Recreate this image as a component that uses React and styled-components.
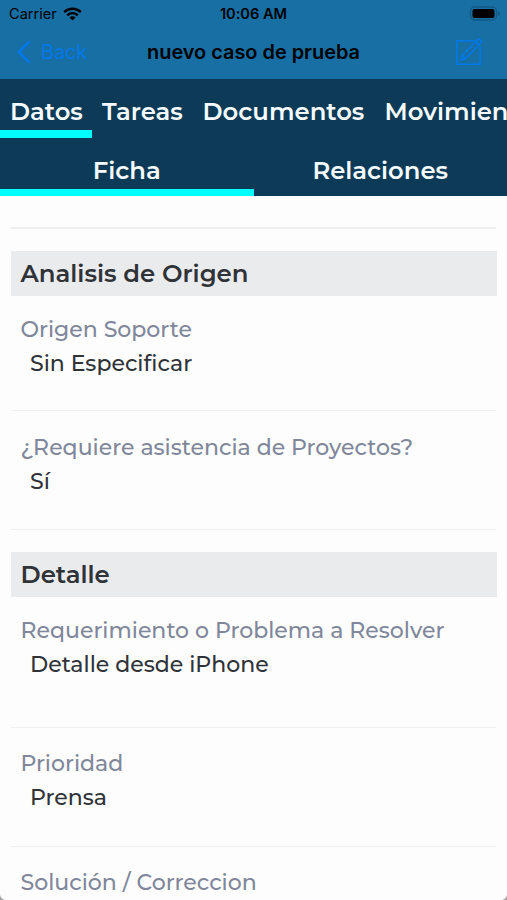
import styled, { createGlobalStyle } from 'styled-components'

const colors = {
  header: '#186fa3',
  tabs: '#0d3b57',
  accent: '#00ffff',
  blue: '#0478e8',
  white: '#f4fafd',
  page: '#fdfdfe',
  section: '#eaebed',
  divider: '#eeeff0',
  label: '#80879a',
  text: '#2f3338',
}

const tabs = [
  { name: 'Datos', width: 92, active: true },
  { name: 'Tareas', width: 100.5 },
  { name: 'Documentos', width: 182 },
  { name: 'Movimientos', width: 190 },
]

const subTabs = [{ name: 'Ficha', active: true }, { name: 'Relaciones' }]

const sections = [
  {
    title: 'Analisis de Origen',
    fields: [
      { label: 'Origen Soporte', value: 'Sin Especificar', height: 115, top: 21 },
      { label: '¿Requiere asistencia de Proyectos?', value: 'Sí', height: 119, top: 24 },
    ],
  },
  {
    title: 'Detalle',
    fields: [
      {
        label: 'Requerimiento o Problema a Resolver',
        value: 'Detalle desde iPhone',
        height: 131,
        top: 21,
      },
      { label: 'Prioridad', value: 'Prensa', height: 119, top: 23 },
      { label: 'Solución / Correccion', value: '', height: 119, top: 23 },
    ],
  },
]

const App = () => {
  return (
    <Screen>
      <GlobalStyle />
      <StatusBar>
        <Carrier>
          Carrier
          <svg width='19' height='14' viewBox='0 0 19 14'>
            <g fill='none' stroke='#000' strokeWidth='2.4'>
              <path d='M1.2 5.1a11.8 11.8 0 0 1 16.6 0' />
              <path d='M4.2 8.3a7.6 7.6 0 0 1 10.6 0' />
            </g>
            <path d='M9.5 13.6L6.4 10.5a4.4 4.4 0 0 1 6.2 0z' />
          </svg>
        </Carrier>
        <Clock>10:06 AM</Clock>
        <Battery>
          <svg width='31' height='15' viewBox='0 0 31 15'>
            <rect x='1.5' y='1' width='26' height='13' rx='4' fill='none' stroke='#125a85' strokeWidth='1.3' />
            <rect x='3.5' y='3' width='22' height='9' rx='2' />
            <path d='M29 5v5q2-1 2-2.500t-2-2.500z' fill='#125a85' />
          </svg>
        </Battery>
      </StatusBar>
      <NavBar>
        <Back>
          <svg width='14' height='24' viewBox='0 0 14 24'>
            <path d='M12.500 1.500L2 12l10.500 10.500' fill='none' stroke='currentColor' strokeWidth='2.600' />
          </svg>
          <span>Back</span>
        </Back>
        <Title>nuevo caso de prueba</Title>
        <Edit>
          <svg width='28' height='28' viewBox='0 0 28 28' fill='none' stroke='currentColor' strokeWidth='1.600'>
            <path d='M20.500 2.800H1.800v23.400h23.400V8' />
            <path d='M6 22l1.300-4.800L22.800 1.700q1-1 2.200 0l1 1q1 1 0 2L10.700 20.200z' />
            <path d='M21 3.500l3.400 3.400M7.300 17.200l3.400 3' />
          </svg>
        </Edit>
      </NavBar>
      <TabBar>
        {tabs.map((tab) => (
          <Tab key={tab.name} $width={tab.width} $active={tab.active}>
            {tab.name}
          </Tab>
        ))}
      </TabBar>
      <SubTabBar>
        {subTabs.map((tab) => (
          <SubTab key={tab.name} $active={tab.active}>
            {tab.name}
          </SubTab>
        ))}
      </SubTabBar>
      <Content>
        <TopDivider />
        {sections.map((section) => (
          <Section key={section.title}>
            <SectionTitle>{section.title}</SectionTitle>
            {section.fields.map((field) => (
              <Field key={field.label} $height={field.height} $top={field.top}>
                <Label>{field.label}</Label>
                <Value>{field.value}</Value>
              </Field>
            ))}
          </Section>
        ))}
      </Content>
      <Corner />
      <Corner $right />
    </Screen>
  )
}

const GlobalStyle = createGlobalStyle`
  * {
    box-sizing: border-box;
  }

  body {
    margin: 0;
    overflow: hidden;
  }
`

const Screen = styled.div`
  position: relative;
  display: flex;
  flex-direction: column;
  width: 507px;
  height: 900px;
  overflow: hidden;

  font-family: Montserrat, Inter, sans-serif;
  font-variant-ligatures: none;
  background: ${colors.page};
`

const StatusBar = styled.div`
  display: grid;
  grid-template-columns: 1fr auto 1fr;
  align-items: center;
  flex: none;
  height: 27px;
  padding: 0 7px;

  font-family: Inter, sans-serif;
  font-size: 14.600px;
  color: #000;
  background: ${colors.header};
`

const Carrier = styled.div`
  display: flex;
  align-items: center;
  gap: 6px;
  padding-left: 2px;

  line-height: 18px;
`

const Clock = styled.div`
  font-weight: 600;
`

const Battery = styled.div`
  display: flex;
  justify-content: flex-end;
`

const NavBar = styled.div`
  display: grid;
  grid-template-columns: 1fr auto 1fr;
  align-items: center;
  flex: none;
  height: 52px;
  padding: 0 17px 2px;

  font-family: Inter, sans-serif;
  background: ${colors.header};
`

const Back = styled.div`
  display: flex;
  align-items: center;
  gap: 10px;

  font-size: 20px;
  letter-spacing: -0.2px;

  color: ${colors.blue};
`

const Title = styled.div`
  font-size: 19.900px;
  font-weight: 600;
  color: #000;
`

const Edit = styled.div`
  display: flex;
  justify-content: flex-end;
  padding-right: 7px;

  color: ${colors.blue};
`

const TabBar = styled.div`
  display: flex;
  flex: none;
  height: 59px;
  overflow: hidden;

  background: ${colors.tabs};
`

const Tab = styled.div`
  flex: none;
  width: ${({ $width }) => $width}px;
  padding: 17px 0 0 10px;

  font-size: 24.300px;
  font-weight: 600;
  line-height: 30px;
  white-space: nowrap;

  color: ${colors.white};
  border-bottom: 8px solid ${({ $active }) => ($active ? colors.accent : 'transparent')};
`

const SubTabBar = styled.div`
  display: grid;
  grid-template-columns: 1fr 1fr;
  flex: none;
  height: 58px;

  background: ${colors.tabs};
`

const SubTab = styled.div`
  padding-top: 17px;

  font-size: 24.300px;
  font-weight: 600;
  line-height: 30px;
  text-align: center;

  color: ${colors.white};
  border-bottom: 7px solid ${({ $active }) => ($active ? colors.accent : 'transparent')};
`

const Content = styled.div`
  flex: 1;
  min-height: 0;
  padding: 31px 10px 0 11px;
  overflow: hidden;
`

const TopDivider = styled.div`
  height: 2px;
  margin-right: 1px;

  background: ${colors.divider};
`

const Section = styled.section`
  padding-top: 22px;
`

const SectionTitle = styled.h2`
  height: 45px;
  margin: 0;
  padding-left: 9.500px;

  font-size: 24.400px;
  font-weight: 600;
  line-height: 45px;

  color: ${colors.text};
  background: ${colors.section};
`

const Field = styled.div`
  height: ${({ $height }) => $height}px;
  margin-right: 1px;
  padding: ${({ $top }) => $top}px 0 0 9.500px;

  font-size: 22.040px;
  font-weight: 500;
  line-height: 26px;
  white-space: nowrap;

  border-bottom: 1px solid ${colors.divider};
`

const Label = styled.div`
  color: ${colors.label};
`

const Value = styled.div`
  margin-top: 8px;
  padding-left: 9.500px;

  color: ${colors.text};
`

// the rounded lower corners of the device screen
const Corner = styled.div`
  position: absolute;
  bottom: 0;
  ${({ $right }) => ($right ? 'right: 0;' : 'left: 0;')}
  width: 6px;
  height: 6px;

  background: radial-gradient(
    circle at ${({ $right }) => ($right ? '0 0' : '100% 0')},
    transparent 5.500px,
    #a5a5a6 6.500px
  );
`

export default App
